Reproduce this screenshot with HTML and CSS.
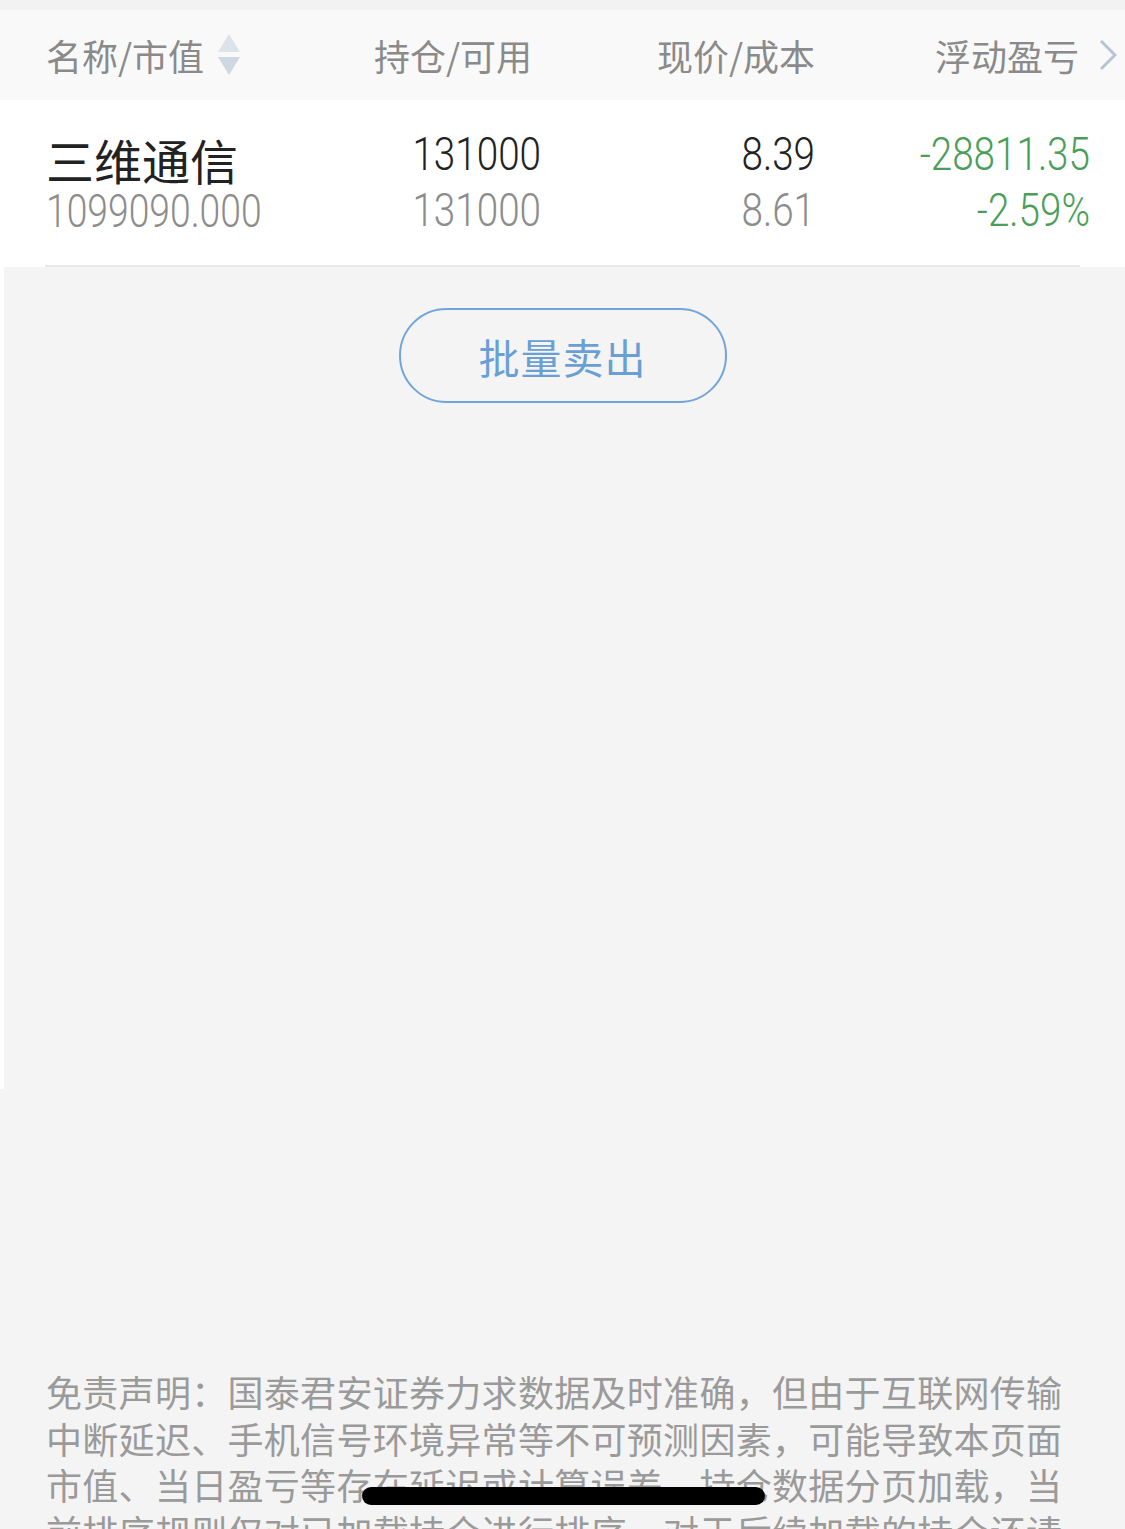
FILE: index.html
```html
<!DOCTYPE html>
<html lang="zh-CN">
<head>
  <meta charset="UTF-8" />
  <meta name="viewport" content="width=device-width, initial-scale=1.0"/>
  <title>持仓</title>
  <link rel="stylesheet" href="styles.css">
</head>
<body>

  <div class="topStrip"></div>

  <div class="tableHead">
    <div class="headCell first">
      名称/市值
      <svg class="sortIcon" width="24" height="42" viewBox="0 0 24 42">
        <path d="M12 0 L23 18 L1 18 Z" fill="#dde3ea"/>
        <path d="M1 23 L23 23 L12 41 Z" fill="#cfd8e2"/>
      </svg>
    </div>
    <div class="headCell">持仓/可用</div>
    <div class="headCell">现价/成本</div>
    <div class="headCell last">
      浮动盈亏
      <svg class="chevron" width="18" height="32" viewBox="0 0 18 32">
        <path d="M2 2 L16 16 L2 30" fill="none" stroke="#b9c4d3" stroke-width="3"/>
      </svg>
    </div>
  </div>

  <div class="stockRow">
    <div class="cell nameCell">
      <div class="stockName">三维通信</div>
      <div class="num sub">1099090.000</div>
    </div>
    <div class="cell">
      <div class="num main">131000</div>
      <div class="num sub">131000</div>
    </div>
    <div class="cell">
      <div class="num main">8.39</div>
      <div class="num sub">8.61</div>
    </div>
    <div class="cell">
      <div class="num main down">-28811.35</div>
      <div class="num sub down">-2.59%</div>
    </div>
  </div>

  <div class="listArea">
    <button class="batchBtn">批量卖出</button>
  </div>

  <p class="disclaimer">免责声明：国泰君安证券力求数据及时准确，但由于互联网传输中断延迟、手机信号环境异常等不可预测因素，可能导致本页面市值、当日盈亏等存在延迟或计算误差，持仓数据分页加载，当前排序规则仅对已加载持仓进行排序，对于后续加载的持仓还请以实际为准。</p>

  <div class="homeBar"></div>

</body>
</html>
```

FILE: styles.css
```css
body {
  margin: 0;
  background: #f4f4f4;
  font-family: "Noto Sans CJK SC", "Noto Sans", sans-serif;
  height: 1529px;
  overflow: hidden;
  position: relative;
}

.topStrip {
  height: 10px;
  background: #f2f2f2;
}

.tableHead {
  height: 90px;
  background: #f9f9f9;
  display: grid;
  grid-template-columns: 1fr 200px 283px 302px;
  align-items: center;
  padding: 0 8px 0 46px;
  font-size: 36px;
  color: #8a8a8a;
}

.headCell {
  text-align: right;
  line-height: 1;
}

.headCell.first {
  text-align: left;
  display: flex;
  align-items: center;
}

.headCell.last {
  display: flex;
  justify-content: flex-end;
  align-items: center;
}

.sortIcon {
  margin-left: 13px;
}

.chevron {
  margin-left: 20px;
}

.stockRow {
  background: #fff;
  height: 167px;
  display: grid;
  grid-template-columns: 1fr 200px 274px 275px;
  padding: 0 35px 0 46px;
  position: relative;
}

/* divider under the row */
.stockRow::after {
  content: "";
  position: absolute;
  left: 45px;
  right: 45px;
  bottom: 0;
  height: 2px;
  background: #e8e8e8;
}

.cell {
  text-align: right;
  padding-top: 26px;
}

.nameCell {
  text-align: left;
  padding-top: 33px;
}

.stockName {
  font-size: 48px;
  line-height: 52px;
  color: #222;
  margin-bottom: 4px;
}

.num {
  font-family: Roboto, "Liberation Sans", sans-serif;
  font-weight: 300;
  font-size: 46px;
  line-height: 56px;
  transform: scaleX(0.84);
  transform-origin: right center;
}

.nameCell .num {
  line-height: 44px;
  transform: scaleX(0.81);
  transform-origin: left center;
}

.num.main {
  color: #222;
}

.num.sub {
  color: #8c8c8c;
}

.num.down {
  color: #4b9e5a;
}

.listArea {
  height: 822px;
  border-left: 4px solid #fff;
  display: flex;
  justify-content: center;
  align-items: flex-start;
}

.batchBtn {
  margin-top: 41px;
  margin-left: -4px;
  width: 328px;
  height: 95px;
  border: 2.5px solid #72a5d7;
  border-radius: 48px;
  background: transparent;
  color: #6a9fd4;
  font-family: "Noto Sans CJK SC", sans-serif;
  font-size: 41px;
  letter-spacing: 1px;
}

.disclaimer {
  margin: 0;
  padding: 279px 40px 0 46px;
  font-size: 36px;
  line-height: 46.5px;
  letter-spacing: 0.3px;
  color: #9a9a9a;
}

.homeBar {
  position: absolute;
  left: 362px;
  top: 1487px;
  width: 403px;
  height: 18px;
  border-radius: 9px;
  background: #000;
}
```
